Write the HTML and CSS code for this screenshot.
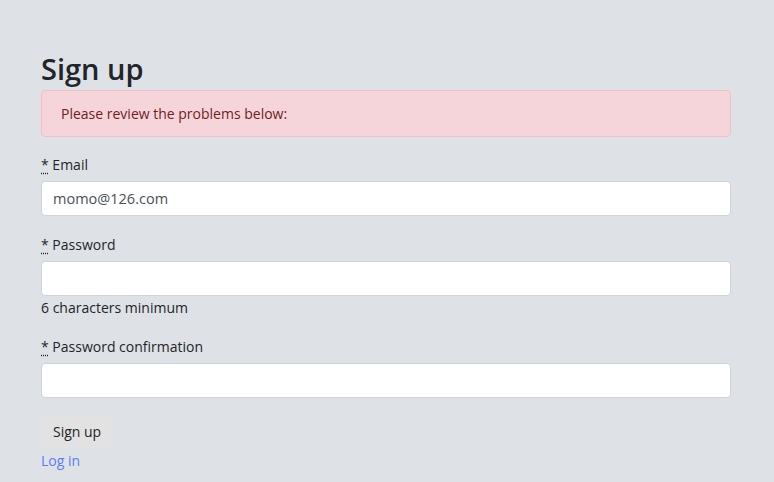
FILE: index.html
```html
<!DOCTYPE html>
<html>
<head>
<meta charset="utf-8">
<link rel="stylesheet" href="styles.css">
</head>
<body>
<main class="container">
  <h2 class="title">Sign up</h2>
  <form class="form">
    <div class="alert">Please review the problems below:</div>
    <div class="group">
      <label class="label"><abbr title="required">*</abbr> Email</label>
      <input class="input" type="email" value="momo@126.com">
    </div>
    <div class="group">
      <label class="label"><abbr title="required">*</abbr> Password</label>
      <input class="input" type="password">
      <small class="hint">6 characters minimum</small>
    </div>
    <div class="group">
      <label class="label"><abbr title="required">*</abbr> Password confirmation</label>
      <input class="input" type="password">
    </div>
    <button class="btn" type="button">Sign up</button>
  </form>
  <a class="link" href="#">Log in</a>
</main>
</body>
</html>
```
FILE: styles.css
```css
html, body {
  margin: 0;
  padding: 0;
}
body {
  background: #dee2e6;
  font-family: "Open Sans", "Noto Sans", sans-serif;
  font-size: 14px;
  color: #212529;
  line-height: 21px;
}
.container {
  width: 690px;
  margin: 0 0 0 41px;
  padding-top: 51px;
}
.title {
  margin: 0 0 4px 0;
  font-size: 29px;
  font-weight: 600;
  line-height: 35px;
}
.form {
  display: flex;
  flex-direction: column;
}
.alert {
  background: #f5d5d9;
  border: 1px solid #f1c0c6;
  border-radius: 4px;
  color: #721c24;
  padding: 12px 19px;
  margin-bottom: 17px;
}
.group {
  display: flex;
  flex-direction: column;
  margin-bottom: 18px;
}
.label {
  margin-bottom: 6px;
}
abbr {
  text-decoration: underline dotted;
  text-underline-offset: 3px;
  cursor: help;
}
.input {
  box-sizing: border-box;
  height: 35px;
  width: 100%;
  border: 1px solid #ced4da;
  border-radius: 4px;
  background: #fff;
  padding: 6px 11px;
  font: inherit;
  font-size: 14.5px;
  color: #495057;
}
.hint {
  font-size: 14px;
  margin-top: 1px;
}
.btn {
  align-self: flex-start;
  margin-top: -2px;
  background: #e2e2e2;
  border: none;
  border-radius: 4px;
  height: 35px;
  padding: 0 12px;
  font: inherit;
  color: #212529;
}
.link {
  display: block;
  margin-top: 1px;
  color: #5b7cff;
  text-decoration: none;
}
```
